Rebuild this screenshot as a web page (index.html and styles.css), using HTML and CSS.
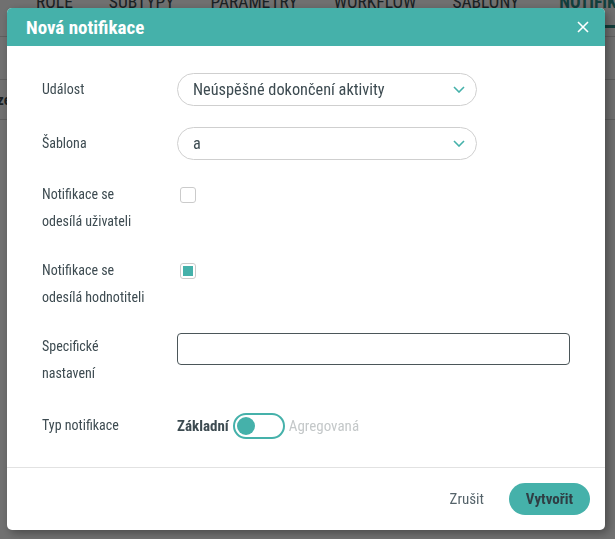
FILE: index.html
```html
<!DOCTYPE html>
<html lang="cs">
<head>
<meta charset="utf-8">
<title>Nová notifikace</title>
<link rel="stylesheet" href="styles.css">
</head>
<body>
<div class="page">
  <nav class="tabs">
    <span class="tab">ROLE</span>
    <span class="tab">SUBTYPY</span>
    <span class="tab">PARAMETRY</span>
    <span class="tab">WORKFLOW</span>
    <span class="tab">ŠABLONY</span>
    <span class="tab active">NOTIFIKACE</span>
  </nav>
  <div class="subbar"></div>
  <div class="subbar2"><span class="subtext">ze</span></div>
</div>
<div class="overlay">
  <div class="modal">
    <div class="modal-header">
      <h1 class="modal-title">Nová notifikace</h1>
      <svg class="close" width="12" height="12" viewBox="0 0 12 12"><path d="M1 1 L11 11 M11 1 L1 11" stroke="#fff" stroke-width="1.6" fill="none"/></svg>
    </div>
    <div class="modal-body">
      <div class="row row-select">
        <div class="label">Událost</div>
        <div class="select">
          <span class="select-text">Neúspěšné dokončení aktivity</span>
          <svg class="chev" width="12" height="7" viewBox="0 0 12 7"><path d="M1 1 L6 6 L11 1" stroke="#45b1aa" stroke-width="1.6" fill="none"/></svg>
        </div>
      </div>
      <div class="row row-select">
        <div class="label">Šablona</div>
        <div class="select">
          <span class="select-text">a</span>
          <svg class="chev" width="12" height="7" viewBox="0 0 12 7"><path d="M1 1 L6 6 L11 1" stroke="#45b1aa" stroke-width="1.6" fill="none"/></svg>
        </div>
      </div>
      <div class="row">
        <div class="label">Notifikace se<br>odesílá uživateli</div>
        <span class="checkbox"></span>
      </div>
      <div class="row">
        <div class="label">Notifikace se<br>odesílá hodnotiteli</div>
        <span class="checkbox checked"><span class="check-fill"></span></span>
      </div>
      <div class="row row-spec">
        <div class="label">Specifické<br>nastavení</div>
        <div class="textinput"></div>
      </div>
      <div class="row row-last">
        <div class="label">Typ notifikace</div>
        <div class="switch-wrap">
          <span class="switch-on">Základní</span>
          <span class="switch"><span class="knob"></span></span>
          <span class="switch-off">Agregovaná</span>
        </div>
      </div>
    </div>
    <div class="modal-footer">
      <span class="cancel">Zrušit</span>
      <span class="btn-primary">Vytvořit</span>
    </div>
  </div>
</div>
</body>
</html>
```
FILE: styles.css
```css
* { box-sizing: border-box; }
html, body { margin: 0; padding: 0; }
body {
  width: 615px;
  height: 539px;
  overflow: hidden;
  font-family: "Roboto Condensed", "Liberation Sans Narrow", "DejaVu Sans Condensed", "Roboto", sans-serif;
  color: #3d4b51;
  background: #fff;
  position: relative;
}
.page { height: 539px; }
.tabs {
  display: flex;
  gap: 36px;
  padding-left: 36px;
  height: 37px;
  border-bottom: 1px solid #d8d8d8;
  align-items: flex-start;
}
.tab {
  font-size: 17.5px;
  color: #3d4b51;
  line-height: 22px;
  margin-top: -9px;
}
.tab.active {
  color: #2b8f88;
  font-weight: bold;
  border-bottom: 3px solid #2b8f88;
  height: 37px;
  margin-left: 4px;
}
.subbar {
  height: 43px;
  border-bottom: 1px solid #d8d8d8;
}
.subbar2 {
  height: 40px;
  border-bottom: 1px solid #d8d8d8;
  display: flex;
  align-items: center;
}
.subtext { font-weight: bold; font-size: 15px; margin-left: -3px; }
.overlay {
  position: fixed;
  inset: 0;
  background: rgba(0,0,0,0.56);
  padding: 8px 10px 0 7px;
}
.modal {
  background: #fff;
  border-radius: 5px;
  overflow: hidden;
  height: 522px;
  box-shadow: 3px 3px 10px rgba(0,0,0,0.35);
  display: flex;
  flex-direction: column;
}
.modal-header {
  background: #45b1aa;
  height: 39px;
  display: flex;
  align-items: center;
  justify-content: space-between;
  padding: 0 16px 0 19px;
}
.modal-title {
  margin: 0;
  color: #fff;
  font-size: 19px;
  font-weight: bold;
}
.close { display: block; }
.modal-body {
  padding: 27px 35px 28px 35px;
  flex: 1;
  border-bottom: 1px solid #e2e2e2;
}
.row {
  display: flex;
  align-items: flex-start;
  margin-bottom: 22px;
}
.row-spec { margin-bottom: 25px; }
.row-last { margin-bottom: 0; }
.label {
  width: 135px;
  flex: none;
  font-size: 14px;
  line-height: 27px;
}
.row-select { margin-bottom: 21px; }
.row-select .label { line-height: 33px; }
.select {
  width: 300px;
  height: 33px;
  border: 1px solid #cfcfcf;
  border-radius: 17px;
  display: flex;
  align-items: center;
  justify-content: space-between;
  padding: 0 11px 0 15px;
}
.select-text { font-size: 16.3px; color: #3d4b51; }
.chev { display: block; }
.checkbox {
  width: 16px;
  height: 16px;
  margin: 6px 0 0 3px;
  border: 1px solid #cbcbcb;
  border-radius: 3px;
  display: flex;
  align-items: center;
  justify-content: center;
}
.check-fill {
  width: 10px;
  height: 10px;
  background: #45b1aa;
}
.textinput {
  width: 393px;
  height: 32px;
  border: 1px solid #4b5659;
  border-radius: 4px;
}
.switch-wrap {
  display: flex;
  align-items: center;
  height: 27px;
}
.switch-on { font-weight: bold; font-size: 15px; color: #3d4b51; }
.switch {
  margin: 0 4px;
  width: 52px;
  height: 26px;
  border: 2px solid #45b1aa;
  border-radius: 13px;
  display: flex;
  align-items: center;
  padding-left: 2px;
}
.knob {
  width: 18px;
  height: 18px;
  border-radius: 50%;
  background: #45b1aa;
}
.switch-off { font-size: 15px; color: #c4c8c9; }
.modal-footer {
  height: 63px;
  display: flex;
  align-items: center;
  justify-content: flex-end;
  padding-right: 15px;
  gap: 25px;
}
.cancel { font-size: 15px; color: #55636a; }
.btn-primary {
  background: #45b1aa;
  color: #2f3e44;
  font-weight: bold;
  font-size: 15px;
  height: 32px;
  padding: 0 16px;
  border-radius: 16px;
  display: flex;
  align-items: center;
  width: 81px;
  justify-content: center;
}
```
